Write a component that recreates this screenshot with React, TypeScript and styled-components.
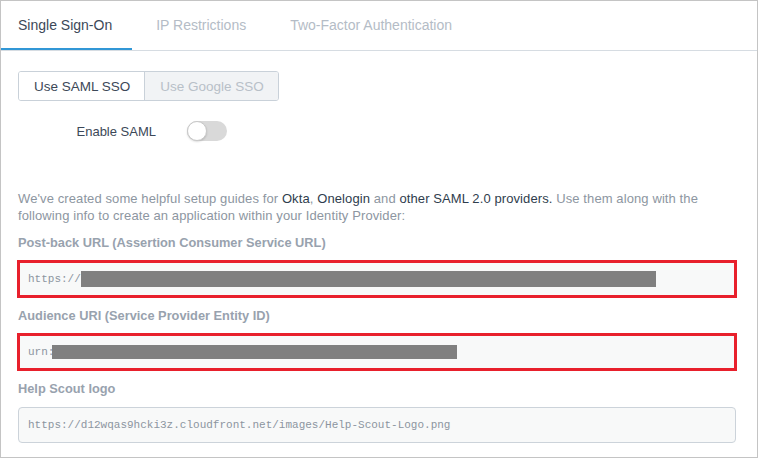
import React, { useState } from "react";
import styled, { createGlobalStyle } from "styled-components";

const Global = createGlobalStyle`
  html, body { margin: 0; padding: 0; background: #ffffff; }
  body { font-family: "Liberation Sans", Arial, sans-serif; }
  * { box-sizing: border-box; }
`;

const Frame = styled.div`
  width: 758px;
  height: 458px;
  border: 1px solid #c4c4c4;
  background: #ffffff;
  overflow: hidden;
`;

const TabBar = styled.div`
  display: flex;
  gap: 7px;
  height: 50px;
  border-bottom: 1px solid #d6dce2;
`;

const Tab = styled.div<{ $active?: boolean }>`
  display: flex;
  align-items: center;
  height: 49px;
  padding: 0 20px 0 17px;
  font-size: 14px;
  color: ${(p) => (p.$active ? "#3c4858" : "#b4bcc6")};
  border-bottom: 2px solid ${(p) => (p.$active ? "#3197d6" : "transparent")};
`;

const Content = styled.div`
  padding: 20px 21px 0 17px;
  display: flex;
  flex-direction: column;
`;

const ButtonGroup = styled.div`
  display: flex;
  align-self: flex-start;
  height: 30px;
  border: 1px solid #c9d1d9;
  border-radius: 3px;
  overflow: hidden;
`;

const SegButton = styled.div<{ $active?: boolean }>`
  display: flex;
  align-items: center;
  padding: 0 14px 0 15px;
  font-size: 13.5px;
  color: ${(p) => (p.$active ? "#3c4858" : "#b8c0c8")};
  background: ${(p) => (p.$active ? "#ffffff" : "#f1f3f5")};
  & + & {
    border-left: 1px solid #c9d1d9;
  }
`;

const ToggleRow = styled.div`
  display: grid;
  grid-template-columns: 138px 40px;
  column-gap: 31px;
  align-items: center;
  margin-top: 20px;
`;

const ToggleLabel = styled.div`
  text-align: right;
  font-size: 13px;
  color: #3c4858;
`;

const Track = styled.div`
  position: relative;
  width: 40px;
  height: 20px;
  border-radius: 10px;
  background: #d9d9d9;
`;

const Knob = styled.div`
  position: absolute;
  left: 0;
  top: 0;
  width: 20px;
  height: 20px;
  border-radius: 50%;
  background: #ffffff;
  border: 1px solid #c8c8c8;
  box-shadow: 0 1px 2px rgba(0, 0, 0, 0.15);
`;

const Intro = styled.p`
  margin: 49px 0 0 0;
  font-size: 13px;
  letter-spacing: 0.1px;
  line-height: 17px;
  color: #8d96a1;
`;

const Link = styled.span`
  color: #2f3d4d;
`;

const Field = styled.div`
  display: flex;
  flex-direction: column;
  margin-top: 10px;
  &:first-of-type {
    margin-top: 9px;
  }
`;

const Label = styled.div`
  font-size: 12.8px;
  font-weight: bold;
  line-height: 18px;
  color: #98a2ae;
  margin-bottom: 9px;
`;

const Input = styled.div<{ $highlight?: boolean }>`
  display: flex;
  align-items: center;
  height: ${(p) => (p.$highlight ? "38px" : "36px")};
  margin: ${(p) => (p.$highlight ? "-1px -1px" : "0")};
  padding-left: ${(p) => (p.$highlight ? "8px" : "9px")};
  background: #f8f9f9;
  border: ${(p) => (p.$highlight ? "3px solid #e8202c" : "1px solid #ccd3da")};
  border-radius: ${(p) => (p.$highlight ? "0" : "4px")};
  font-family: "Liberation Mono", "DejaVu Sans Mono", monospace;
  font-size: 11px;
  color: #8c95a0;
  white-space: nowrap;
`;

const Redact = styled.span<{ $w: number; $h: number; $shift?: number }>`
  display: inline-block;
  width: ${(p) => p.$w}px;
  height: ${(p) => p.$h}px;
  margin-left: ${(p) => p.$shift ?? 0}px;
  background: #808080;
`;

export default function App() {
  const [tab] = useState(0);
  const tabs = ["Single Sign-On", "IP Restrictions", "Two-Factor Authentication"];
  return (
    <>
      <Global />
      <Frame>
        <TabBar>
          {tabs.map((t, i) => (
            <Tab key={t} $active={i === tab}>
              {t}
            </Tab>
          ))}
        </TabBar>
        <Content>
          <ButtonGroup>
            <SegButton $active>Use SAML SSO</SegButton>
            <SegButton>Use Google SSO</SegButton>
          </ButtonGroup>
          <ToggleRow>
            <ToggleLabel>Enable SAML</ToggleLabel>
            <Track>
              <Knob />
            </Track>
          </ToggleRow>
          <Intro>
            We've created some helpful setup guides for <Link>Okta</Link>,{" "}
            <Link>Onelogin</Link> and <Link>other SAML 2.0 providers.</Link> Use them
            along with the following info to create an application within your
            Identity Provider:
          </Intro>
          <Field>
            <Label>Post-back URL (Assertion Consumer Service URL)</Label>
            <Input $highlight>
              https://
              <Redact $w={575} $h={16} />
            </Input>
          </Field>
          <Field>
            <Label>Audience URI (Service Provider Entity ID)</Label>
            <Input $highlight>
              urn:
              <Redact $w={405} $h={14} $shift={-2} />
            </Input>
          </Field>
          <Field>
            <Label>Help Scout logo</Label>
            <Input>https://d12wqas9hcki3z.cloudfront.net/images/Help-Scout-Logo.png</Input>
          </Field>
        </Content>
      </Frame>
    </>
  );
}
